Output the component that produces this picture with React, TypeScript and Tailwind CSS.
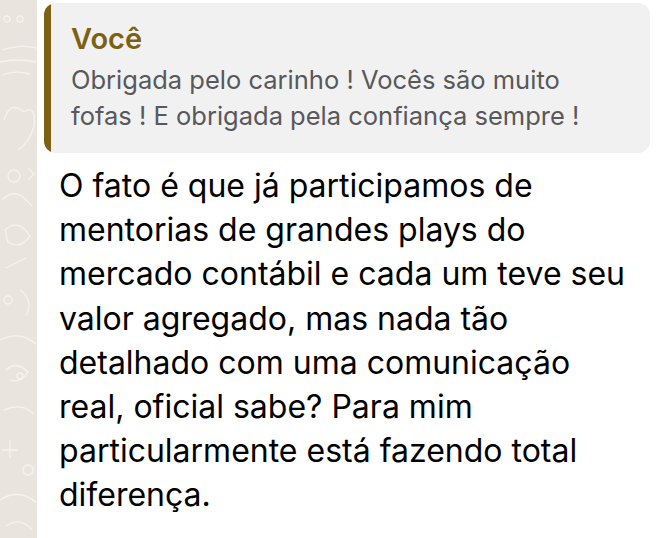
import React from 'react';

const quoteLines = ['Obrigada pelo carinho ! Vocês são muito', 'fofas ! E obrigada pela confiança sempre !'];

const bodyLines = [
  'O fato é que já participamos de',
  'mentorias de grandes plays do',
  'mercado contábil e cada um teve seu',
  'valor agregado, mas nada tão',
  'detalhado com uma comunicação',
  'real, oficial sabe? Para mim',
  'particularmente está fazendo total',
  'diferença.',
];

function Doodles() {
  return (
    <svg width="37" height="538" viewBox="0 0 37 538" fill="none" stroke="#ffffff" strokeOpacity="0.55" strokeWidth="1.3">
      <circle cx="7" cy="19" r="3" />
      <circle cx="20" cy="19" r="3" />
      <path d="M2 50 Q20 44 37 48" />
      <path d="M0 62 Q18 58 36 62" />
      <path d="M2 75 Q15 70 30 74" />
      <path d="M4 120 Q10 100 24 112 Q36 104 34 126 Q30 142 18 150" />
      <circle cx="14" cy="176" r="6" />
      <path d="M28 168 l6 6 l-6 6" />
      <path d="M3 200 Q10 190 22 196 L32 206" />
      <path d="M5 230 Q18 218 30 236 Q20 250 8 242 Z" />
      <path d="M6 268 l20 -10" />
      <circle cx="8" cy="300" r="4" />
      <path d="M20 290 Q34 300 26 316" />
      <path d="M0 340 Q20 330 36 344" />
      <path d="M6 370 Q16 360 28 372 Q20 384 10 380" />
      <circle cx="20" cy="376" r="3" />
      <path d="M4 410 Q22 402 34 414" />
      <path d="M10 440 l0 18 M2 450 l16 0" />
      <circle cx="28" cy="470" r="5" />
      <path d="M0 500 Q18 488 36 502" />
      <path d="M6 526 Q20 516 32 530" />
    </svg>
  );
}

export default function App() {
  return (
    <div className="flex w-[657px] h-[538px] overflow-hidden bg-white" style={{ fontFamily: 'Inter, "Noto Sans", sans-serif' }}>
      <div className="w-[37px] shrink-0 bg-[#e9e5de]">
        <Doodles />
      </div>
      <div className="flex-1 bg-white pl-[7px] pr-[7px] pt-[3px]">
        <div className="flex h-[150px] rounded-[12px] overflow-hidden bg-[#f1f1f2]">
          <div className="w-[7px] shrink-0 bg-[#7c6113]" />
          <div className="pl-[20px] pt-[18.5px]">
            <div className="text-[29px] leading-[34px] font-semibold text-[#7c6113]">Você</div>
            <div className="mt-[6.5px] text-[25.5px] leading-[36px] text-[#58585a]">
              {quoteLines.map((l) => (
                <div key={l}>{l}</div>
              ))}
            </div>
          </div>
        </div>
        <div className="pl-[15px] pt-[11.3px] text-[32px] leading-[44.1px] text-black">
          {bodyLines.map((l) => (
            <div key={l}>{l}</div>
          ))}
        </div>
      </div>
    </div>
  );
}
